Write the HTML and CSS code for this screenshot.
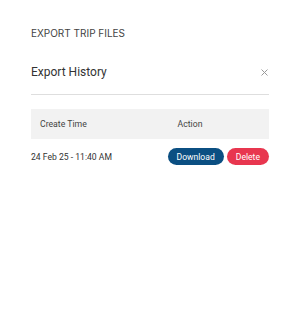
FILE: index.html
```html
<!DOCTYPE html>
<html lang="en">
<head>
    <meta charset="UTF-8">
    <meta name="viewport" content="width=device-width, initial-scale=1.0">
    <title>Export Trip Files</title>
    <link rel="stylesheet" href="styles.css">
</head>
<body>
    <div class="page">
        <h1 class="page-title">EXPORT TRIP FILES</h1>
        <div class="panel">
            <div class="panel-head">
                <h2>Export History</h2>
                <svg class="close" width="7" height="7" viewBox="0 0 7 7">
                    <path d="M0.5 0.5 L6.5 6.5 M6.5 0.5 L0.5 6.5" stroke="#9a9a9a" stroke-width="1" fill="none"/>
                </svg>
            </div>
            <table class="history">
                <thead>
                    <tr>
                        <th class="col-time">Create Time</th>
                        <th class="col-action">Action</th>
                    </tr>
                </thead>
                <tbody>
                    <tr>
                        <td class="time">24 Feb 25 - 11:40 AM</td>
                        <td class="actions">
                            <button class="btn btn-download">Download</button>
                            <button class="btn btn-delete">Delete</button>
                        </td>
                    </tr>
                </tbody>
            </table>
        </div>
    </div>
</body>
</html>
```

FILE: styles.css
```css
body {
    margin: 0;
    background: #fff;
    font-family: Roboto, sans-serif;
    color: #333;
}
.page {
    padding: 27px 31px;
}
.page-title {
    margin: 0;
    font-family: Inter, sans-serif;
    font-size: 10px;
    font-weight: 400;
    color: #444;
    line-height: 12px;
}
.panel {
    margin-top: 23px;
}
.panel-head {
    display: flex;
    justify-content: space-between;
    align-items: center;
    padding-bottom: 12px;
    border-bottom: 1px solid #dedede;
}
.panel-head h2 {
    margin: 0;
    font-size: 12px;
    font-weight: 400;
    color: #333;
    line-height: 20px;
}
.close {
    margin-right: 1px;
}
.history {
    width: 100%;
    margin-top: 14px;
    border-collapse: collapse;
}
.history th {
    background: #f2f2f2;
    height: 30px;
    font-size: 8.7px;
    font-weight: 400;
    color: #444;
    text-align: left;
    padding: 0;
}
.col-time {
    padding-left: 9px !important;
}
.col-action {
    width: 91px;
    padding-left: 10px !important;
}
.history td {
    padding: 9px 0 0;
    font-size: 8.6px;
    color: #333;
}
.actions {
    text-align: right;
    white-space: nowrap;
    font-size: 0 !important;
}
.btn {
    border: none;
    border-radius: 9px;
    height: 17px;
    padding: 0 9px;
    font-family: Roboto, sans-serif;
    font-size: 8.6px;
    color: #fff;
    cursor: pointer;
    vertical-align: middle;
}
.btn-download {
    background: #0b4f82;
}
.btn-delete {
    background: #e8364f;
    margin-left: 3px;
}
```
